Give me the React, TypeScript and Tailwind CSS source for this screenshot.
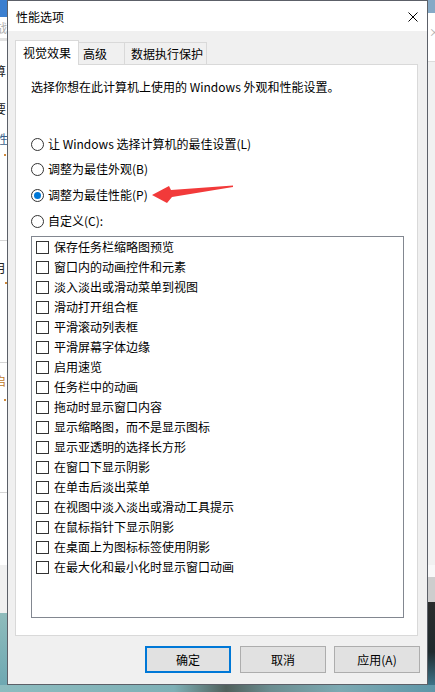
import React from 'react';

// Visual effects options shown in the list box
const effects: string[] = [
  '保存任务栏缩略图预览',
  '窗口内的动画控件和元素',
  '淡入淡出或滑动菜单到视图',
  '滑动打开组合框',
  '平滑滚动列表框',
  '平滑屏幕字体边缘',
  '启用速览',
  '任务栏中的动画',
  '拖动时显示窗口内容',
  '显示缩略图，而不是显示图标',
  '显示亚透明的选择长方形',
  '在窗口下显示阴影',
  '在单击后淡出菜单',
  '在视图中淡入淡出或滑动工具提示',
  '在鼠标指针下显示阴影',
  '在桌面上为图标标签使用阴影',
  '在最大化和最小化时显示窗口动画',
];

const radios = [
  { label: '让 Windows 选择计算机的最佳设置(L)', checked: false, gap: 'mt-[41px]' },
  { label: '调整为最佳外观(B)', checked: false, gap: 'mt-[9px]' },
  { label: '调整为最佳性能(P)', checked: true, gap: 'mt-[10px]' },
  { label: '自定义(C):', checked: false, gap: 'mt-[10px]' },
];

const Radio = ({ checked }: { checked: boolean }) => (
  <span className="w-[13px] h-[13px] rounded-full border border-[#333] bg-white flex items-center justify-center shrink-0">
    {checked && <span className="w-[7px] h-[7px] rounded-full bg-[#0078d7]" />}
  </span>
);

// Partial window peeking out on the left of the dialog
const LeftStrip = () => (
  <div className="w-[7px] flex flex-col overflow-hidden text-[12px] leading-[16px]">
    <div className="h-[17px] bg-[#3b7fd0]" />
    <div className="h-[21px] bg-white pt-[3px] text-[#b0b0b0] -ml-[5px]">战</div>
    <div className="h-[3px] bg-[#e2e2e2]" />
    <div className="h-[199px] bg-white -ml-[6px] text-[#222]">
      <div className="mt-[22px]">算</div>
      <div className="mt-[22px]">要</div>
      <div className="mt-[14px] text-[#3a5f8a] ml-[2px]">性</div>
      <div className="mt-[7px] ml-[10px] w-[2px] h-[2px] bg-[#d08a3a]" />
    </div>
    <div className="h-px bg-[#d5d5d5]" />
    <div className="h-[121px] bg-white -ml-[6px] text-[#222]">
      <div className="mt-[19px]">月</div>
      <div className="mt-[6px] ml-[11px] w-[2px] h-[2px] bg-[#d08a3a]" />
    </div>
    <div className="h-px bg-[#d5d5d5]" />
    <div className="h-[129px] bg-white -ml-[6px] text-[#c07a2a]">
      <div className="mt-[10px]">启</div>
      <div className="mt-[10px] ml-[10px] w-[2px] h-[2px] bg-[#d08a3a]" />
    </div>
    <div className="h-px bg-[#d5d5d5]" />
    <div className="h-[72px] bg-white" />
    <div className="h-[48px] bg-[#f0f0f0]" />
    <div className="flex-1 bg-[linear-gradient(180deg,#8fbcbc,#6ea8b2)]" />
  </div>
);

const RightStrip = () => (
  <div className="w-[7px] flex flex-col overflow-hidden">
    <div className="h-[13px] bg-[#86a9c6]" />
    <div className="h-[48px] bg-white relative">
      <span className="absolute left-[1px] top-[14px] text-[11px] leading-[11px] text-[#aaa]">×</span>
    </div>
    <div className="h-px bg-[#dcdcdc]" />
    <div className="h-[503px] bg-[#f1f1f1]" />
    <div className="h-[12px] bg-[#f8f8f8]" />
    <div className="h-[25px] bg-[#cdcdcd]" />
    <div className="flex-1 bg-[linear-gradient(180deg,#2a2c2c,#1f2a2e_60%,#3d7388)]" />
  </div>
);

export default function App() {
  return (
    <div className="relative w-[435px] h-[692px] overflow-hidden flex flex-col bg-white font-['Noto_Sans_CJK_SC',sans-serif] text-[12px] leading-[16px] text-black">
      <div className="flex h-[685px]">
        <LeftStrip />

        {/* Performance options dialog */}
        <div className="w-[421px] h-[685px] border border-[#5c6068] flex flex-col">
          <div className="h-[30px] bg-white flex items-center justify-between pl-[8px] pr-[9px]">
            <span className="mt-[1px]">性能选项</span>
            <svg width="10" height="10" viewBox="0 0 10 10" className="mt-[1px]">
              <path d="M0.5 0.5L9.5 9.5M9.5 0.5L0.5 9.5" stroke="#000" strokeWidth="1" />
            </svg>
          </div>

          <div className="flex-1 bg-[#f0f0f0] pl-[7px] pt-[9px] flex flex-col">
            <div className="flex items-end h-[25px] -mb-px relative z-10">
              <div className="w-[64px] h-[25px] bg-white border border-b-0 border-[#d9d9d9] pl-[7px] flex items-center">
                视觉效果
              </div>
              <div className="w-[46px] h-[22px] mb-px border-t border-r border-[#d9d9d9] pl-[4px] flex items-center">
                高级
              </div>
              <div className="w-[82px] h-[22px] mb-px border-t border-r border-[#d9d9d9] pl-[6px] flex items-center">
                数据执行保护
              </div>
            </div>

            <div className="w-[403px] h-[572px] bg-white border border-[#d9d9d9] pl-[15px] flex flex-col">
              <p className="mt-[14px]">选择你想在此计算机上使用的 Windows 外观和性能设置。</p>

              {radios.map((r) => (
                <div key={r.label} className={`${r.gap} flex items-center gap-[4px] h-[16px]`}>
                  <Radio checked={r.checked} />
                  <span>{r.label}</span>
                </div>
              ))}

              <div className="mt-[7px] w-[373px] h-[382px] border border-[#828790] pl-[4px] flex flex-col">
                {effects.map((e) => (
                  <div key={e} className="h-[20px] flex items-center gap-[5px]">
                    <span className="w-[13px] h-[13px] border border-[#333] bg-white shrink-0" />
                    <span>{e}</span>
                  </div>
                ))}
              </div>
            </div>

            <div className="mt-[10px] flex justify-end">
              <button className="w-[86px] h-[27px] bg-[#e1e1e1] border-2 border-[#0078d7] flex items-center justify-center">
                确定
              </button>
              <button className="ml-[9px] w-[86px] h-[27px] bg-[#e1e1e1] border border-[#adadad] flex items-center justify-center">
                取消
              </button>
              <button className="ml-[8px] mr-[7px] w-[86px] h-[27px] bg-[#e1e1e1] border border-[#adadad] flex items-center justify-center">
                应用(A)
              </button>
            </div>
          </div>
        </div>

        <RightStrip />
      </div>

      <div className="h-[7px] bg-[linear-gradient(90deg,#8cbcbf_0%,#7eb0b6_40%,#50605c_52%,#6b8d90_62%,#7ca9b2_78%,#5e96a8_100%)]" />

      {/* Red annotation arrow pointing at the selected option */}
      <svg className="absolute left-0 top-0 pointer-events-none" width="435" height="692">
        <polygon
          points="152,195 169,186 171,190 233,185.5 233,187 172,197 167,203"
          fill="#f23a3a"
        />
      </svg>
    </div>
  );
}
